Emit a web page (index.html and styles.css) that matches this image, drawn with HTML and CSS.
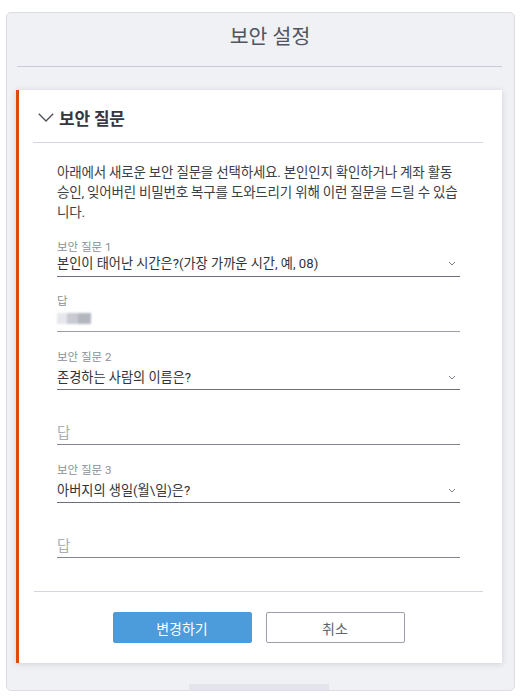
FILE: index.html
```html
<!DOCTYPE html>
<html lang="ko">
<head>
<meta charset="utf-8">
<title>보안 설정</title>
<link rel="stylesheet" href="styles.css">
</head>
<body>
<div class="panel">
  <h1 class="panel-title">보안 설정</h1>
  <hr class="panel-divider">
  <section class="card">
    <header class="card-head">
      <svg class="head-chevron" width="16" height="9" viewBox="0 0 16 9"><path d="M0.8 0.8 L8 8 L15.2 0.8" fill="none" stroke="#4a4f58" stroke-width="1.3"/></svg>
      <span class="head-title">보안 질문</span>
    </header>
    <hr class="card-divider">
    <div class="card-body">
      <p class="intro">아래에서 새로운 보안 질문을 선택하세요. 본인인지 확인하거나 계좌 활동 승인, 잊어버린 비밀번호 복구를 도와드리기 위해 이런 질문을 드릴 수 있습니다.</p>

      <div class="field select-field first">
        <div class="field-label">보안 질문 1</div>
        <div class="field-row"><span class="value">본인이 태어난 시간은?(가장 가까운 시간, 예, 08)</span><svg class="sel-chevron" width="8" height="5" viewBox="0 0 8 5"><path d="M1 1 L4 4 L7 1" fill="none" stroke="#7a7f8a" stroke-width="1"/></svg></div>
      </div>
      <div class="field answer-field light">
        <div class="field-label">답</div>
        <div class="field-row"><span class="blurred"></span></div>
      </div>

      <div class="field select-field">
        <div class="field-label">보안 질문 2</div>
        <div class="field-row"><span class="value">존경하는 사람의 이름은?</span><svg class="sel-chevron" width="8" height="5" viewBox="0 0 8 5"><path d="M1 1 L4 4 L7 1" fill="none" stroke="#7a7f8a" stroke-width="1"/></svg></div>
      </div>
      <div class="field answer-field">
        <div class="field-label"></div>
        <div class="field-row"><span class="placeholder">답</span></div>
      </div>

      <div class="field select-field">
        <div class="field-label">보안 질문 3</div>
        <div class="field-row"><span class="value">아버지의 생일(월\일)은?</span><svg class="sel-chevron" width="8" height="5" viewBox="0 0 8 5"><path d="M1 1 L4 4 L7 1" fill="none" stroke="#7a7f8a" stroke-width="1"/></svg></div>
      </div>
      <div class="field answer-field">
        <div class="field-label"></div>
        <div class="field-row"><span class="placeholder">답</span></div>
      </div>
    </div>
    <hr class="card-divider bottom">
    <div class="actions">
      <button class="btn btn-primary">변경하기</button>
      <button class="btn btn-secondary">취소</button>
    </div>
  </section>
  <div class="panel-tab"></div>
</div>
</body>
</html>
```

FILE: styles.css
```css
* { box-sizing: border-box; }

body {
  margin: 0;
  background: #ffffff;
  font-family: Roboto, "Noto Sans CJK KR", sans-serif;
  color: #333840;
}

.panel {
  margin: 12px 0 0 6px;
  width: 509px;
  background: #f0f1f5;
  border: 1px solid #dcdde4;
  border-radius: 5px;
  padding: 0 12px 0 9px;
}

.panel-title {
  margin: 0;
  padding: 12px 0 0 22px;
  height: 53px;
  font-size: 20.5px;
  line-height: 24px;
  font-weight: 400;
  color: #50555e;
  text-align: center;
}

.panel-divider {
  margin: 0 0 23px 1px;
  border: 0;
  border-top: 1px solid #c9cbdb;
  height: 0;
}

.card {
  background: #ffffff;
  border-left: 3px solid #e2470f;
  box-shadow: 0 1px 6px rgba(40, 45, 70, 0.16);
}

.card-head {
  display: flex;
  align-items: center;
  height: 52px;
  padding: 2px 0 0 19px;
}

.head-chevron { display: block; margin-right: 5px; }

.head-title {
  font-size: 17px;
  font-weight: 700;
  color: #333840;
  letter-spacing: -0.2px;
}

.card-divider {
  margin: 0 19px 0 14px;
  border: 0;
  border-top: 1px solid #d3d6e0;
  height: 0;
}

.card-body {
  padding: 0 42px 0 38px;
}

.intro {
  margin: 19px 0 0;
  font-size: 13.5px;
  line-height: 20px;
  letter-spacing: -0.2px;
  word-break: break-all;
  color: #3c4048;
}

.field {
  border-bottom: 1px solid #6a6f7a;
}

.select-field { padding-top: 18px; height: 58px; }
.select-field.first { height: 55px; }
.select-field.first .field-label { margin-bottom: -4px; }

.answer-field { padding-top: 17px; height: 55px; border-bottom-color: #80858f; }
.answer-field.light { border-bottom-color: #9a9eab; }
.answer-field .field-row { height: 20px; }

.field-label {
  height: 14px;
  font-size: 11.5px;
  line-height: 14px;
  color: #8a8f9b;
}

.field-row {
  display: flex;
  align-items: center;
  justify-content: space-between;
  height: 24px;
  padding-right: 4px;
}

.value {
  font-size: 13.2px;
  color: #2f333a;
}

.sel-chevron { display: block; margin-top: 2px; }

.placeholder {
  font-size: 14.5px;
  color: #a9adb8;
}

.blurred {
  display: block;
  width: 34px;
  height: 11px;
  background: linear-gradient(90deg, #e6e7ec 0 30%, #c9cad2 30% 62%, #b4b6bf 62% 100%);
  filter: blur(1.2px);
}

.card-divider.bottom { margin-top: 33px; margin-right: 19px; margin-left: 15px; }

.actions {
  display: flex;
  justify-content: center;
  gap: 14px;
  padding: 20px 0 20px;
  margin-left: -4px;
}

.btn {
  width: 139px;
  height: 31px;
  font-family: Roboto, "Noto Sans CJK KR", sans-serif;
  font-size: 14px;
  border-radius: 2px;
  cursor: pointer;
}

.btn-primary {
  background: #4c9bdb;
  border: 1px solid #4c9bdb;
  color: #ffffff;
}

.btn-secondary {
  background: #ffffff;
  border: 1px solid #9a9fa9;
  color: #60656e;
}

.panel-tab {
  width: 140px;
  height: 6px;
  margin: 21px auto 0;
  background: #e3e4ec;
}
```
